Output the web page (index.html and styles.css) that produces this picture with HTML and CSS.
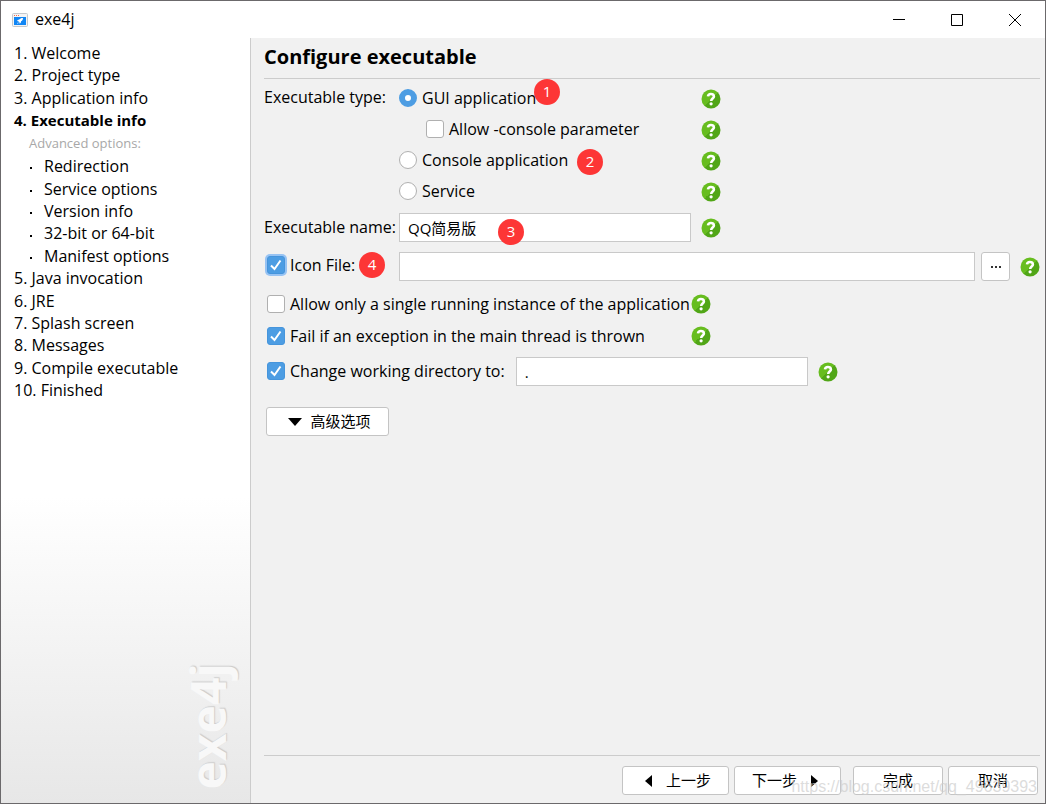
FILE: index.html
```html
<!DOCTYPE html>
<html lang="en">
<head>
<meta charset="utf-8">
<title>exe4j</title>
<link rel="stylesheet" href="styles.css">
</head>
<body>
<svg class="defs" aria-hidden="true">
  <linearGradient id="green" x1="0" y1="0" x2="1" y2="1">
    <stop offset=".5" stop-color="#67bd1f"/><stop offset=".5" stop-color="#51a617"/>
  </linearGradient>
  <symbol id="help" viewBox="0 0 20 20">
    <circle cx="10" cy="10" r="9.5" fill="url(#green)"/>
    <path d="M7 7.400C7.200 5.600 8.400 5 9.900 5c1.800 0 3 .9 3 2.400 0 2.100-2.700 2.200-2.700 4.600" fill="none" stroke="#fff" stroke-width="2.600"/>
    <circle cx="10.100" cy="14.800" r="1.600" fill="#fff"/>
  </symbol>
</svg>
<div class="window">
  <header class="titlebar">
    <svg class="app-icon" viewBox="0 0 16 14" aria-hidden="true">
      <rect x=".5" y=".5" width="15" height="13" rx="1" fill="#f4f4f4" stroke="#c4c8cc"/>
      <path d="M2 2h1v1H2zM4 2h1v1H4zM6 2h1v1H6z" fill="#f26a50"/>
      <path d="M2 4h12v8H2z" fill="#1086f5"/>
      <path d="M11 5c-2 0-3 .6-3.700 1.600l-1.500.3-.8 1.200 1.300.1 1.200 1.200.1 1.300 1.200-.9.300-1.500C10.400 7.500 11 6.500 11 5zM6 9.200l-1 1.800 1.700-1z" fill="#fff"/>
    </svg>
    <span class="app-name">exe4j</span>
    <div class="window-buttons">
      <button aria-label="Minimize"><svg viewBox="0 0 12 12"><path d="M0 5.500h12"/></svg></button>
      <button aria-label="Maximize"><svg viewBox="0 0 12 12"><path d="M.5.5h11v11H.5z"/></svg></button>
      <button aria-label="Close"><svg viewBox="0 0 12 12"><path d="M0 0l12 12M12 0L0 12"/></svg></button>
    </div>
  </header>
  <div class="body">
    <nav class="sidebar">
      <ul class="steps">
        <li>1. Welcome</li>
        <li>2. Project type</li>
        <li>3. Application info</li>
        <li class="current">4. Executable info</li>
        <li class="hint">Advanced options:</li>
        <li class="sub">Redirection</li>
        <li class="sub">Service options</li>
        <li class="sub">Version info</li>
        <li class="sub">32-bit or 64-bit</li>
        <li class="sub">Manifest options</li>
        <li>5. Java invocation</li>
        <li>6. JRE</li>
        <li>7. Splash screen</li>
        <li>8. Messages</li>
        <li>9. Compile executable</li>
        <li>10. Finished</li>
      </ul>
      <div class="brand">exe4j</div>
    </nav>
    <main class="content">
      <h1>Configure executable</h1>
      <form class="form">
        <div class="types">
          <span class="caption">Executable type:</span>
          <div class="options">
            <div class="option"><label><input type="radio" name="type" checked>GUI application</label><span class="badge raised">1</span></div>
            <div class="option nested"><label><input type="checkbox">Allow -console parameter</label></div>
            <div class="option"><label><input type="radio" name="type">Console application</label><span class="badge apart">2</span></div>
            <div class="option"><label><input type="radio" name="type">Service</label></div>
          </div>
          <div class="helps">
            <svg class="help"><use href="#help"/></svg>
            <svg class="help"><use href="#help"/></svg>
            <svg class="help"><use href="#help"/></svg>
            <svg class="help"><use href="#help"/></svg>
          </div>
        </div>
        <div class="row">
          <label class="caption" for="name">Executable name:</label>
          <div class="field short"><input type="text" id="name" value="QQ简易版"><span class="badge inside">3</span></div>
          <svg class="help"><use href="#help"/></svg>
        </div>
        <div class="row icon-row">
          <div class="caption"><label><input type="checkbox" class="focused" checked>Icon File:</label><span class="badge close">4</span></div>
          <div class="field"><input type="text" aria-label="Icon file path"></div>
          <button type="button" class="browse" aria-label="Browse"><svg viewBox="0 0 12 4"><path d="M1 1h2v2H1zM5 1h2v2H5zM9 1h2v2H9z"/></svg></button>
          <svg class="help"><use href="#help"/></svg>
        </div>
        <div class="checks">
          <label><input type="checkbox">Allow only a single running instance of the application</label>
          <svg class="help"><use href="#help"/></svg>
          <label><input type="checkbox" checked>Fail if an exception in the main thread is thrown</label>
          <svg class="help"><use href="#help"/></svg>
        </div>
        <div class="row dir-row">
          <label><input type="checkbox" checked>Change working directory to:</label>
          <div class="field short"><input type="text" aria-label="Working directory" value="."></div>
          <svg class="help"><use href="#help"/></svg>
        </div>
        <button type="button" class="button advanced"><svg class="down" viewBox="0 0 14 8"><path d="M0 0h14L7 8z"/></svg>高级选项</button>
      </form>
      <footer class="actions">
        <button class="button wide back"><svg class="side" viewBox="0 0 8 12"><path d="M8 0v12L1 6z"/></svg>上一步</button>
        <button class="button wide next">下一步<svg class="side" viewBox="0 0 8 12"><path d="M0 0v12l7-6z"/></svg></button>
        <button class="button finish">完成</button>
        <button class="button">取消</button>
      </footer>
    </main>
  </div>
  <div class="watermark">https://blog.csdn.net/qq_49639393</div>
</div>
</body>
</html>
```
FILE: styles.css
```css
* { box-sizing: border-box; }

body {
  margin: 0;
  color: #000;
  font: 16px/1.4 "Open Sans", "Noto Sans CJK SC", sans-serif;
}

button, input { font: inherit; font-size: 15px; color: inherit; }

.defs { position: absolute; width: 0; height: 0; }

.window {
  position: relative;
  display: flex;
  flex-direction: column;
  min-height: 100vh;
  border: 1px solid #6b696b;
  background: #fff;
}

.titlebar { display: flex; align-items: center; height: 37px; padding-left: 11px; }
.app-icon { width: 16px; height: 14px; margin-right: 7px; }
.window-buttons { display: flex; margin-left: auto; padding-right: 1px; }
.window-buttons button { width: 58px; height: 35px; padding: 0; border: 0; background: none; }
.window-buttons svg { display: block; width: 12px; height: 12px; margin: auto; fill: none; stroke: #000; }

.body { display: flex; flex: 1; }

.sidebar {
  display: flex;
  flex-direction: column;
  justify-content: space-between;
  width: 250px;
  padding: 4px 4px 13px 13px;
  border-right: 1px solid #ccc;
  background: linear-gradient(#fff 60%, #e7e7e7);
}
.steps { margin: 0; padding: 0; list-style: none; }
.current { font-size: 15px; line-height: 23px; font-weight: 700; }
.hint { padding-left: 15px; color: #a8a8a8; font-size: 13px; line-height: 23px; }
.sub { display: flex; align-items: center; gap: 12px; padding-left: 16px; }
.sub::before { content: ""; width: 2px; height: 2px; margin-top: 4px; background: #000; }
.brand {
  align-self: flex-end;
  margin-right: 14px;
  color: #f8f8f8;
  font: 700 48px/1 "Open Sans", sans-serif;
  writing-mode: vertical-rl;
  transform: rotate(180deg);
  text-shadow: 1px 1px 1px #ccc;
}

.content { display: flex; flex: 1; flex-direction: column; padding: 0 5px 8px 13px; background: #f1f1f1; }
h1 {
  margin: 0;
  padding: 4px 0 6px;
  border-bottom: 1px solid #ccc;
  font: 700 20px/30px "Open Sans", sans-serif;
}

.form { display: flex; flex: 1; flex-direction: column; align-items: flex-start; padding-top: 4px; }
label { display: inline-flex; align-items: center; gap: 5px; white-space: nowrap; }
.caption { width: 135px; }

.types { display: flex; padding-bottom: 1px; }
.types .caption { line-height: 28px; }
.options { width: 292px; }
.option { display: flex; align-items: center; height: 31px; }
.nested { padding-left: 27px; }
.helps { display: grid; grid-auto-rows: 31px; align-items: center; margin-left: 10px; }
.help { flex: none; width: 20px; height: 20px; }

.row { display: flex; align-items: center; height: 39px; width: 100%; }
.field { position: relative; flex: 1; }
.field.short { flex: 0 0 292px; margin-right: 10px; }
.field input { display: block; width: 100%; height: 29px; padding: 0 8px; border: 1px solid #c9c9c9; background: #fff; }

input[type="radio"], input[type="checkbox"] {
  flex: none;
  appearance: none;
  width: 18px;
  height: 18px;
  margin: 0;
  border: 1px solid #b0b0b0;
  border-radius: 3px;
  background: #fff center / 100% no-repeat;
}
input[type="radio"] { border-radius: 50%; }
input[type="radio"]:checked { border: 6px solid #4d9de3; }
input[type="checkbox"]:checked {
  border-color: #4695dc;
  background-color: #4d9de3;
  background-image: url("data:image/svg+xml,%3Csvg xmlns='http://www.w3.org/2000/svg' viewBox='0 0 16 16'%3E%3Cpath d='M3 8.500l3.500 3.500L12.500 3.500' fill='none' stroke='white' stroke-width='2'/%3E%3C/svg%3E");
}
.focused { box-shadow: 0 0 0 2px #97c3f3; }

.badge {
  position: absolute;
  width: 26px;
  height: 26px;
  border-radius: 50%;
  background: #fd3636;
  color: #fff;
  font-size: 15px;
  line-height: 24px;
  text-align: center;
}
.option, .icon-row .caption { position: relative; }
.raised { left: 135px; top: -4px; }
.apart { left: 178px; top: 4px; }
.inside { left: 99px; top: 6px; }
.close { left: 95px; top: -2px; }

.browse {
  width: 29px;
  height: 29px;
  margin: 0 10px 0 6px;
  padding: 0;
  border: 1px solid #c4c4c4;
  border-radius: 3px;
  background: #fff;
}
.browse svg { display: block; width: 12px; height: 4px; margin: auto; fill: #333; }

.checks { display: grid; grid-template-columns: 414px auto; grid-auto-rows: 32px; align-items: center; column-gap: 10px; padding: 2px 0 0 3px; }
.dir-row { padding-left: 3px; }
.dir-row label { margin-right: 11px; }
.icon-row label { padding-left: 3px; }

.button {
  display: flex;
  align-items: center;
  justify-content: center;
  gap: 14px;
  width: 90px;
  height: 29px;
  padding: 0;
  border: 1px solid #c4c4c4;
  border-radius: 3px;
  background: #fff;
}
.advanced { gap: 8px; width: 123px; margin: 16px 0 0 2px; padding-left: 4px; }
.down { width: 14px; height: 8px; }
.side { width: 8px; height: 12px; }

.actions { display: flex; justify-content: flex-end; gap: 5px; padding: 10px 2px 0; border-top: 1px solid #ccc; }
.wide { width: 107px; }
.back { padding-left: 4px; }
.next { padding-right: 4px; }
.finish { margin-left: 7px; }

.watermark {
  position: absolute;
  right: 8px;
  bottom: 6px;
  color: rgba(205, 205, 205, .7);
  font: 16px/20px "Liberation Sans", sans-serif;
  pointer-events: none;
}
```
